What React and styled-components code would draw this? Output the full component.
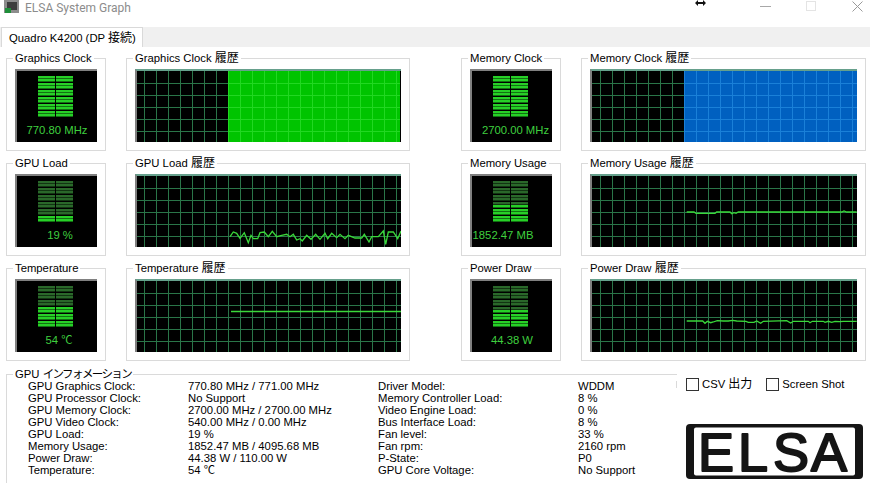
import React from 'react';
import styled, { createGlobalStyle } from 'styled-components';

const Global = createGlobalStyle`
  html, body { margin: 0; padding: 0; background: #fff; }
  body { font-family: "Liberation Sans", "Noto Sans CJK JP", sans-serif; font-size: 11.3px; color: #000; }
`;

const Page = styled.div`
  width: 870px; height: 491px; overflow: hidden; background: #fff; display: flex; flex-direction: column;
`;
const TitleBar = styled.header`
  height: 27px; display: flex; align-items: flex-start; padding-left: 4px; box-sizing: border-box; position: relative;
`;
const AppIcon = styled.svg`width: 15px; height: 14px; display: block;`;
const Title = styled.span`
  margin: 1px 0 0 6px; font: 12px/14px Roboto, sans-serif; color: #8c8c8c;
`;
const CursorMark = styled.svg`position: absolute; left: 695px; top: 0; width: 11px; height: 6px;`;
const WinControls = styled.div`
  margin: 1px 0 0 auto; display: flex; align-items: flex-start; padding-right: 7px; gap: 35px;
`;
const WinIcon = styled.svg`width: 11px; height: 11px; display: block;`;

const TabStrip = styled.nav`height: 20px; background: #f0f0f0; display: flex; padding-left: 1px;`;
const Tab = styled.div`
  width: 142px; box-sizing: border-box; background: #fff; border: 1px solid #d9d9d9; border-bottom: none;
  padding-left: 7px; line-height: 20px; white-space: nowrap;
`;
const Cjk = styled.span`font-size: 12px;`;
const Kana = styled.span`font-size: 11.5px; letter-spacing: -1.6px;`;

const Board = styled.main`
  display: grid; grid-template-columns: 100px 284px 131px 285px; column-gap: 20px;
  grid-auto-rows: 100px; row-gap: 5px; padding: 4px 0 0 6px;
`;
const Group = styled.fieldset`
  margin: 0; min-width: 0; box-sizing: border-box; height: 100px; width: 100%;
  border: 1px solid #dadada; padding: 4px 8px 0;
`;
const MeterGroup = styled(Group)`width: 100px; justify-self: end;`;
const Caption = styled.legend`
  padding: 0 2px; margin-left: -2px; height: 14px; line-height: 14px; white-space: nowrap;
`;

const MeterFace = styled.div`
  height: 73px; box-sizing: border-box; background: #000; border-top: 2px solid #808080; border-left: 2px solid #808080;
  display: flex; flex-direction: column; padding-top: 5px;
`;
const MeterBars = styled.svg`display: block; width: 35px; height: 42px; margin-left: 21px;`;
const MeterValue = styled.div`
  margin: 6px 0 0 ${p => p.$shift || 0}px; line-height: 12px; color: #3fcf3f; white-space: nowrap; text-align: center;
`;

const ChartFrame = styled.div`
  height: 73px; box-sizing: border-box; background: #000; border-top: 2px solid #66a08c; border-left: 2px solid #808080;
`;
const ChartSvg = styled.svg`display: block; width: 100%; height: 71px;`;

const Bottom = styled.section`display: flex; padding: 6px 0 0 6px;`;
const InfoGroup = styled.fieldset`
  position: relative; margin: 0; min-width: 0; width: 671px; height: 116px; box-sizing: border-box;
  border: 1px solid #dadada; border-right: none; border-bottom: none; padding: 0 0 0 8px;
  &::after { content: ""; position: absolute; right: 0; top: 0; width: 1px; height: 7px; background: #dadada; }
`;
const InfoGrid = styled.div`
  display: grid; grid-template-columns: 160px 190px 200px 1fr; grid-auto-rows: 12px;
  margin: -1px 0 0 13px;
`;
const InfoCell = styled.span`line-height: 12px; white-space: nowrap;`;

const Side = styled.aside`margin-left: 9px; display: flex; flex-direction: column; padding-top: 11px;`;
const Options = styled.div`display: flex; height: 13px; gap: 14px;`;
const Option = styled.label`display: flex; align-items: center; gap: 3px; line-height: 13px; white-space: nowrap;`;
const Check = styled.input`
  appearance: none; margin: 0; width: 13px; height: 13px; box-sizing: border-box; border: 1px solid #333; background: #fff;
`;
const Logo = styled.svg`display: block; width: 177px; height: 55px; margin-top: 33px; overflow: visible;`;

const ROWS = Array.from({ length: 12 }, (_, i) => i);

function BarRow({ y, x, on }) {
  return (
    <>
      <rect x={x} y={y} width="17" height="2" fill={on ? '#27d027' : '#2a682a'} />
      <rect x={x} y={y + 2} width="17" height="1" fill={on ? '#127012' : '#123412'} />
    </>
  );
}

function Meter({ title, value, lit, shift }) {
  return (
    <MeterGroup>
      <Caption>{title}</Caption>
      <MeterFace>
        <MeterBars viewBox="0 0 35 42" shapeRendering="crispEdges">
          {ROWS.map(i => {
            const on = i >= 12 - lit;
            const y = Math.floor(i * 3.5);
            return (
              <g key={i}>
                <BarRow x={0} y={y} on={on} />
                <BarRow x={18} y={y} on={on} />
              </g>
            );
          })}
        </MeterBars>
        <MeterValue $shift={shift}>{value}</MeterValue>
      </MeterFace>
    </MeterGroup>
  );
}

function History({ title, width, first, fillFrom, fillTo, fill, fillLine, line }) {
  const xs = [];
  for (let x = first; x < width; x += 12) xs.push(x);
  const ys = [12.5, 24.5, 36.5, 48.5, 60.5];
  const end = fillTo || width;
  return (
    <Group>
      <Caption>{title} <Cjk>履歴</Cjk></Caption>
      <ChartFrame>
        <ChartSvg viewBox={`0 0 ${width} 71`} preserveAspectRatio="none" shapeRendering="crispEdges">
          {fill && <rect x={fillFrom} y="0" width={end - fillFrom} height="71" fill={fill} />}
          {xs.map(x => (
            <line key={x} x1={x} x2={x} y1="0" y2="71" stroke={fill && x >= fillFrom ? fillLine : '#2a7548'} />
          ))}
          {ys.map(y => (
            <g key={y}>
              <line x1="0" x2={fill ? fillFrom : width} y1={y} y2={y} stroke="#2a7548" />
              {fill && <line x1={fillFrom} x2={end} y1={y} y2={y} stroke={fillLine} />}
            </g>
          ))}
          {line && <polyline points={line} fill="none" stroke="#3ad83a" strokeWidth="1.3" shapeRendering="auto" />}
        </ChartSvg>
      </ChartFrame>
    </Group>
  );
}

const pts = (list, ox, oy) => list.map(([x, y]) => `${(x / 3 + ox).toFixed(1)},${(y / 3 + oy).toFixed(1)}`).join(' ');

const loadLine = pts([[15,62],[25,48],[35,52],[45,67],[58,50],[70,80],[78,58],[85,68],[98,68],[105,50],[118,48],[130,62],[142,46],[155,62],[170,58],[185,55],[195,62],[205,55],[215,72],[225,68],[232,75],[245,58],[258,70],[272,55],[285,70],[300,52],[308,68],[320,52],[335,65],[345,55],[360,68],[370,58],[390,66],[410,66],[418,55],[432,78],[440,62],[460,62],[475,45],[482,85],[490,48],[505,48],[518,68],[528,45]], 88, 40);
const usageLine = pts([[320,63],[342,63],[348,67],[405,67],[410,63],[450,63],[455,68],[462,65],[468,67],[475,63],[785,63],[792,60],[800,63],[830,63]], -12, 15);
const powerLine = pts([[320,387],[368,387],[375,394],[382,388],[392,392],[400,390],[412,386],[430,387],[445,387],[458,385],[470,387],[498,388],[505,391],[522,391],[530,387],[542,394],[550,388],[620,386],[632,393],[640,388],[685,388],[690,392],[697,388],[730,388],[735,391],[745,388],[755,391],[765,388],[780,389],[790,388],[830,388]], -12, -89);

const INFO = [
  ['GPU Graphics Clock:', '770.80 MHz / 771.00 MHz', 'Driver Model:', 'WDDM'],
  ['GPU Processor Clock:', 'No Support', 'Memory Controller Load:', '8 %'],
  ['GPU Memory Clock:', '2700.00 MHz / 2700.00 MHz', 'Video Engine Load:', '0 %'],
  ['GPU Video Clock:', '540.00 MHz / 0.00 MHz', 'Bus Interface Load:', '8 %'],
  ['GPU Load:', '19 %', 'Fan level:', '33 %'],
  ['Memory Usage:', '1852.47 MB / 4095.68 MB', 'Fan rpm:', '2160 rpm'],
  ['Power Draw:', '44.38 W / 110.00 W', 'P-State:', 'P0'],
  ['Temperature:', '54 ℃', 'GPU Core Voltage:', 'No Support'],
];

export default function App() {
  return (
    <Page>
      <Global />
      <TitleBar>
        <AppIcon viewBox="0 0 15 14">
          <rect x="0" y="0" width="15" height="13" fill="#8d8d8d" />
          <rect x="3" y="2" width="10" height="8" fill="#3d3d3d" />
          <rect x="1" y="8" width="6" height="5" fill="#1f8f3a" />
        </AppIcon>
        <Title>ELSA System Graph</Title>
        <CursorMark viewBox="0 0 11 6">
          <path d="M0 3 L3 0 V2 H8 V0 L11 3 L8 6 V4 H3 V6 Z" fill="#111" />
        </CursorMark>
        <WinControls>
          <WinIcon viewBox="0 0 11 11"><line x1="0" x2="11" y1="5.5" y2="5.5" stroke="#a8a8a8" /></WinIcon>
          <WinIcon viewBox="0 0 11 11"><rect x="0.5" y="0.5" width="9" height="9" fill="none" stroke="#e4e4e4" /></WinIcon>
          <WinIcon viewBox="0 0 11 11"><path d="M0.5 0.5 L10.5 10.5 M10.5 0.5 L0.5 10.5" fill="none" stroke="#9a9a9a" /></WinIcon>
        </WinControls>
      </TitleBar>
      <TabStrip><Tab>Quadro K4200 (DP <Cjk>接続</Cjk>)</Tab></TabStrip>
      <Board>
        <Meter title="Graphics Clock" value="770.80 MHz" lit={12} />
        <History title="Graphics Clock" width={264} first={7.5} fillFrom={91} fillTo={263} fill="#00c400" fillLine="#22d822" />
        <Meter title="Memory Clock" value="2700.00 MHz" lit={12} shift={7} />
        <History title="Memory Clock" width={265} first={8.5} fillFrom={92} fill="#0060c0" fillLine="#1a80d8" />

        <Meter title="GPU Load" value="19 %" lit={2} shift={6} />
        <History title="GPU Load" width={264} first={7.5} line={loadLine} />
        <Meter title="Memory Usage" value="1852.47 MB" lit={5} shift={-18} />
        <History title="Memory Usage" width={265} first={8.5} line={usageLine} />

        <Meter title="Temperature" value="54 ℃" lit={6} shift={4} />
        <History title="Temperature" width={264} first={7.5} line="94,30.5 264,30.5" />
        <Meter title="Power Draw" value="44.38 W" lit={5} />
        <History title="Power Draw" width={265} first={8.5} line={powerLine} />
      </Board>
      <Bottom>
        <InfoGroup>
          <Caption>GPU <Kana>インフォメーション</Kana></Caption>
          <InfoGrid>
            {INFO.flat().map((t, i) => <InfoCell key={i}>{t}</InfoCell>)}
          </InfoGrid>
        </InfoGroup>
        <Side>
          <Options>
            <Option><Check type="checkbox" />CSV <Cjk>出力</Cjk></Option>
            <Option><Check type="checkbox" />Screen Shot</Option>
          </Options>
          <Logo viewBox="0 0 177 55">
            <rect x="0" y="0" width="177" height="55" rx="4" fill="#151515" />
            <rect x="8" y="3.5" width="161" height="48" rx="2" fill="#fff" />
            <text x="12 52 87 125" y="46.5" fontFamily="Liberation Sans" fontWeight="400" fontSize="54" fill="#151515" stroke="#151515" strokeWidth="2" strokeLinejoin="round">ELSA</text>
          </Logo>
        </Side>
      </Bottom>
    </Page>
  );
}
